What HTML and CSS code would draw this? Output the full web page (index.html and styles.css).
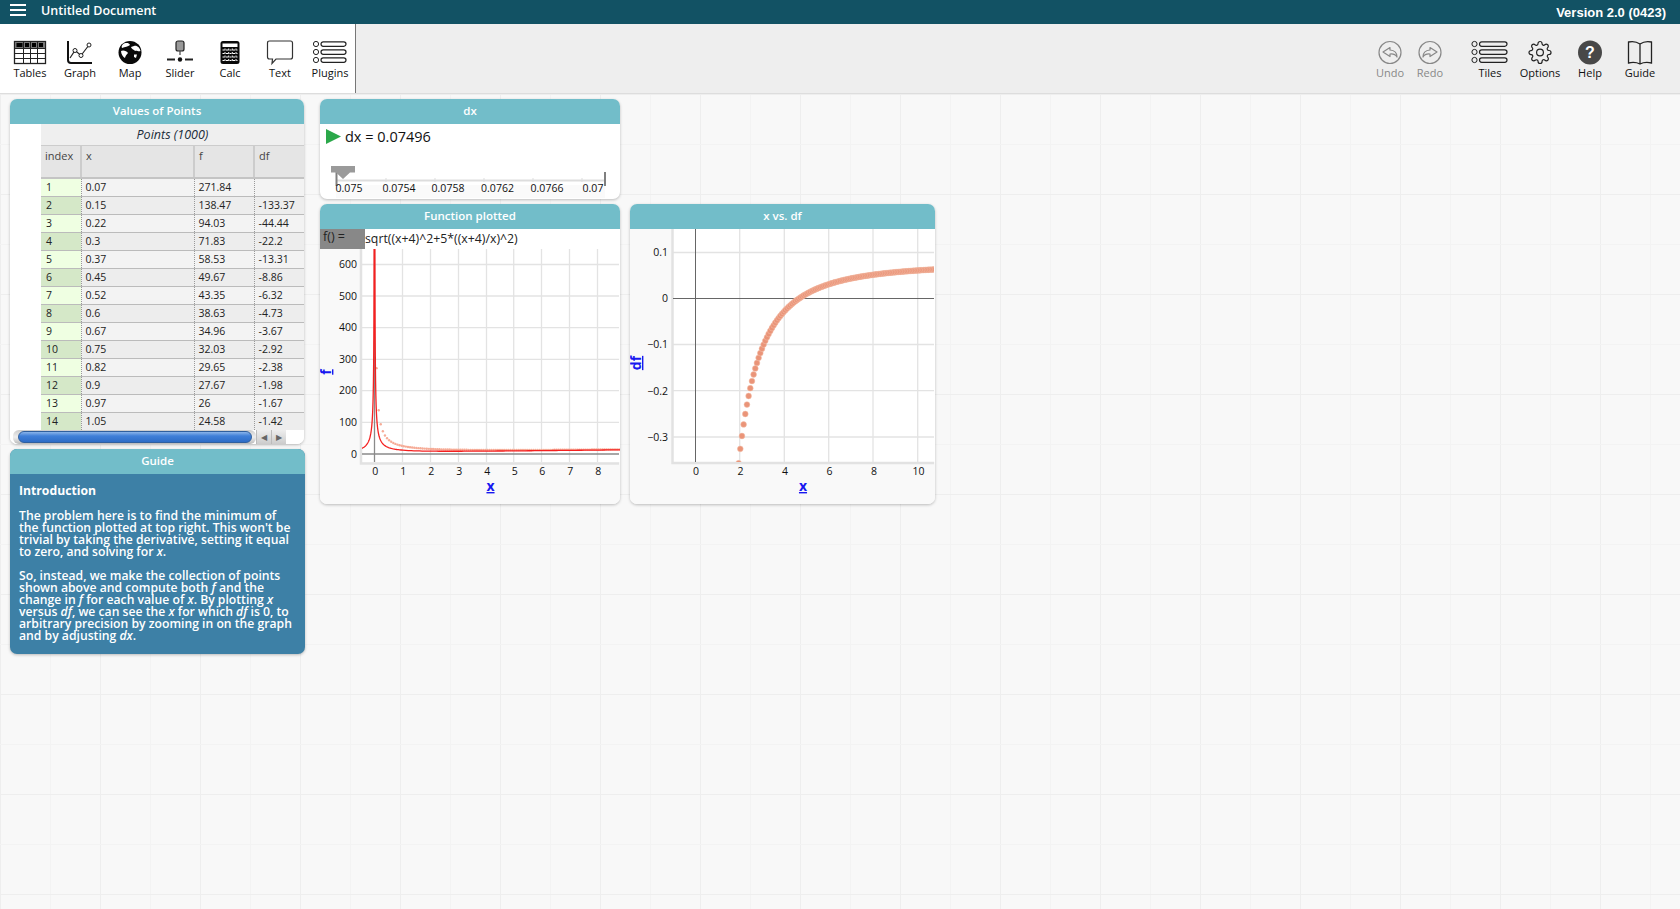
FILE: index.html
```html
<!DOCTYPE html>
<html lang="en">
<head>
<meta charset="utf-8">
<title>Untitled Document</title>
<link rel="stylesheet" href="styles.css">
</head>
<body>
<div class="app">
  <header class="topbar">
    <div class="burger"><span></span><span></span><span></span></div>
    <div class="doc-title">Untitled Document</div>
    <div class="version">Version 2.0 (0423)</div>
  </header>
  <nav class="toolbar">
    <div class="tool-left">
      <div class="tool">
        <svg class="ic" viewBox="0 0 40 26"><rect x="4.5" y="1.5" width="31" height="22" fill="#fff" stroke="#222" stroke-width="1.3"/><rect x="5" y="2" width="30" height="6" fill="#777"/><rect x="6.5" y="3" width="6" height="4" fill="#000"/><rect x="15" y="3" width="4" height="4" fill="#000"/><rect x="22" y="3" width="4" height="4" fill="#000"/><rect x="29" y="3" width="4" height="4" fill="#000"/><path d="M4.500 8.500H35.500M4.500 13.500H35.500M4.500 18.500H35.500M13.500 2V23M20.500 2V23M27.500 2V23" stroke="#222" stroke-width="1" fill="none"/></svg>
        <span class="tool-label">Tables</span>
      </div>
      <div class="tool">
        <svg class="ic" viewBox="0 0 40 26"><path d="M8 1V20Q8 23 11 23H32" fill="none" stroke="#111" stroke-width="2"/><path d="M10 18L15 10.500L21 15.500L29 5" fill="none" stroke="#222" stroke-width="1.200"/><circle cx="15" cy="10.500" r="2" fill="#fff" stroke="#222"/><circle cx="21" cy="15.500" r="2" fill="#fff" stroke="#222"/><circle cx="29" cy="5" r="2" fill="#fff" stroke="#222"/></svg>
        <span class="tool-label">Graph</span>
      </div>
      <div class="tool">
        <svg class="ic" viewBox="0 0 40 26"><circle cx="20" cy="12.500" r="11.500" fill="#0a0a0a"/><path d="M14 3.500C17 2.500 19 3 20 5C18 7 15 6.500 12 8C11 7 12 4.500 14 3.500ZM21 7L24 6C27 5 30 8 30.500 11C28 12 27 10 25 11C24 9 22 10 21 7ZM11 11C13 9.500 17 11 18 13C16.500 15 15.500 15.500 15 18C13 17 11 14 11 11ZM24 14.500L27 14.500L26 18L24 17Z" fill="#fff"/></svg>
        <span class="tool-label">Map</span>
      </div>
      <div class="tool">
        <svg class="ic" viewBox="0 0 40 26"><rect x="16" y="1" width="8" height="10" rx="2" fill="#999" stroke="#222" stroke-width="1.200"/><path d="M20 11V15" stroke="#444" stroke-width="1.200"/><path d="M7 19.500H15M25 19.500H33" stroke="#222" stroke-width="2"/><circle cx="20" cy="19.500" r="2.200" fill="#111"/></svg>
        <span class="tool-label">Slider</span>
      </div>
      <div class="tool">
        <svg class="ic" viewBox="0 0 40 26"><rect x="10.500" y="1" width="19" height="23" rx="2.500" fill="#0a0a0a"/><rect x="12.500" y="3.500" width="15" height="3.500" fill="#fff"/><path d="M12.500 10H27.500M12.500 13.500H27.500M12.500 17H27.500M12.500 20.500H27.500M15 8.500V22.500M18.700 8.500V22.500M22.300 8.500V22.500M26 8.500V22.500" stroke="#fff" stroke-width="1" stroke-dasharray="2 1.500" fill="none"/></svg>
        <span class="tool-label">Calc</span>
      </div>
      <div class="tool">
        <svg class="ic" viewBox="0 0 40 26"><path d="M9.500 1H30.500Q32.500 1 32.500 3V17Q32.500 19 30.500 19H16L12 23.500L12.500 19H9.500Q7.500 19 7.500 17V3Q7.500 1 9.500 1Z" fill="#fff" stroke="#333" stroke-width="1.200"/></svg>
        <span class="tool-label">Text</span>
      </div>
      <div class="tool">
        <svg class="ic" viewBox="0 0 40 26"><circle cx="6" cy="4" r="2.600" fill="none" stroke="#222"/><circle cx="6" cy="12" r="2.600" fill="none" stroke="#222"/><circle cx="6" cy="20" r="2.600" fill="none" stroke="#222"/><rect x="11" y="1.800" width="25" height="4.500" rx="2.200" fill="none" stroke="#222" stroke-width="1.200"/><rect x="11" y="9.800" width="25" height="4.500" rx="2.200" fill="none" stroke="#222" stroke-width="1.200"/><rect x="11" y="17.800" width="25" height="4.500" rx="2.200" fill="none" stroke="#222" stroke-width="1.200"/></svg>
        <span class="tool-label">Plugins</span>
      </div>
    </div>
    <div class="tool-right">
      <div class="tool tool-narrow tool-off">
        <svg class="ic" viewBox="0 0 40 26"><circle cx="20" cy="12.500" r="11" fill="none" stroke="#888" stroke-width="1.200"/><path d="M20 7.500L13 12L20 16.500V14Q25 13.500 27 17Q27 10.500 20 10Z" fill="none" stroke="#888" stroke-width="1.200" stroke-linejoin="round"/></svg>
        <span class="tool-label">Undo</span>
      </div>
      <div class="tool tool-narrow tool-off tool-gap">
        <svg class="ic" viewBox="0 0 40 26"><circle cx="20" cy="12.500" r="11" fill="none" stroke="#888" stroke-width="1.200"/><path d="M20 7.500L27 12L20 16.500V14Q15 13.500 13 17Q13 10.500 20 10Z" fill="none" stroke="#888" stroke-width="1.200" stroke-linejoin="round"/></svg>
        <span class="tool-label">Redo</span>
      </div>
      <div class="tool">
        <svg class="ic" viewBox="0 0 40 26"><circle cx="4.500" cy="4" r="2.600" fill="none" stroke="#222"/><circle cx="4.500" cy="12" r="2.600" fill="none" stroke="#222"/><circle cx="4.500" cy="20" r="2.600" fill="none" stroke="#222"/><rect x="9.500" y="1.800" width="27.500" height="4.500" rx="2.200" fill="none" stroke="#222" stroke-width="1.200"/><rect x="9.500" y="9.800" width="27.500" height="4.500" rx="2.200" fill="none" stroke="#222" stroke-width="1.200"/><rect x="9.500" y="17.800" width="27.500" height="4.500" rx="2.200" fill="none" stroke="#222" stroke-width="1.200"/></svg>
        <span class="tool-label">Tiles</span>
      </div>
      <div class="tool">
        <svg class="ic" viewBox="0 0 40 26"><g transform="translate(8 0.500)" fill="none" stroke="#222" stroke-width="1.200"><circle cx="12" cy="12" r="3.400"/><path d="M19.400 15a1.650 1.650 0 0 0 .33 1.820l.06.06a2 2 0 0 1 0 2.830 2 2 0 0 1-2.830 0l-.06-.06a1.650 1.650 0 0 0-1.820-.33 1.650 1.650 0 0 0-1 1.510V21a2 2 0 0 1-2 2 2 2 0 0 1-2-2v-.09A1.650 1.650 0 0 0 9 19.400a1.650 1.650 0 0 0-1.820.33l-.06.06a2 2 0 0 1-2.830 0 2 2 0 0 1 0-2.830l.06-.06a1.650 1.650 0 0 0 .33-1.820 1.650 1.650 0 0 0-1.510-1H3a2 2 0 0 1-2-2 2 2 0 0 1 2-2h.09A1.650 1.650 0 0 0 4.600 9a1.650 1.650 0 0 0-.33-1.820l-.06-.06a2 2 0 0 1 0-2.830 2 2 0 0 1 2.830 0l.06.06a1.650 1.650 0 0 0 1.820.33H9a1.650 1.650 0 0 0 1-1.510V3a2 2 0 0 1 2-2 2 2 0 0 1 2 2v.09a1.650 1.650 0 0 0 1 1.510 1.650 1.650 0 0 0 1.820-.33l.06-.06a2 2 0 0 1 2.830 0 2 2 0 0 1 0 2.830l-.06.06a1.650 1.650 0 0 0-.33 1.820V9a1.650 1.650 0 0 0 1.510 1H21a2 2 0 0 1 2 2 2 2 0 0 1-2 2h-.09a1.650 1.650 0 0 0-1.510 1z"/></g></svg>
        <span class="tool-label">Options</span>
      </div>
      <div class="tool">
        <svg class="ic" viewBox="0 0 40 26"><circle cx="20" cy="12.500" r="12" fill="#484848"/><text x="20" y="18" class="help-mark">?</text></svg>
        <span class="tool-label">Help</span>
      </div>
      <div class="tool">
        <svg class="ic" viewBox="0 0 40 26"><path d="M20 4Q15 0.500 8.500 2V23Q15 21.500 20 24Q25 21.500 31.500 23V2Q25 0.500 20 4V24" fill="none" stroke="#222" stroke-width="1.300"/></svg>
        <span class="tool-label">Guide</span>
      </div>
    </div>
  </nav>
  <main class="canvas">
    <section class="tile tile-table">
      <div class="tile-head">Values of Points</div>
      <div class="table-wrap">
        <div class="table-gutter"></div>
        <div class="table-main">
          <div class="table-title">Points (1000)</div>
          <table class="data">
            <thead><tr><th class="c-i">index</th><th class="c-x">x</th><th class="c-f">f</th><th class="c-d">df</th></tr></thead>
            <tbody>
              <tr><td>1</td><td>0.07</td><td>271.84</td><td></td></tr>
              <tr><td>2</td><td>0.15</td><td>138.47</td><td>-133.37</td></tr>
              <tr><td>3</td><td>0.22</td><td>94.03</td><td>-44.44</td></tr>
              <tr><td>4</td><td>0.3</td><td>71.83</td><td>-22.2</td></tr>
              <tr><td>5</td><td>0.37</td><td>58.53</td><td>-13.31</td></tr>
              <tr><td>6</td><td>0.45</td><td>49.67</td><td>-8.86</td></tr>
              <tr><td>7</td><td>0.52</td><td>43.35</td><td>-6.32</td></tr>
              <tr><td>8</td><td>0.6</td><td>38.63</td><td>-4.73</td></tr>
              <tr><td>9</td><td>0.67</td><td>34.96</td><td>-3.67</td></tr>
              <tr><td>10</td><td>0.75</td><td>32.03</td><td>-2.92</td></tr>
              <tr><td>11</td><td>0.82</td><td>29.65</td><td>-2.38</td></tr>
              <tr><td>12</td><td>0.9</td><td>27.67</td><td>-1.98</td></tr>
              <tr><td>13</td><td>0.97</td><td>26</td><td>-1.67</td></tr>
              <tr><td>14</td><td>1.05</td><td>24.58</td><td>-1.42</td></tr>
            </tbody>
          </table>
        </div>
      </div>
      <div class="scrollbar">
        <div class="scroll-track"><div class="scroll-thumb"></div></div>
        <div class="scroll-btn">◀</div>
        <div class="scroll-btn">▶</div>
      </div>
    </section>

    <section class="tile tile-guide">
      <div class="tile-head">Guide</div>
      <div class="guide-body">
        <h3 class="guide-h">Introduction</h3>
        <p class="guide-p">The problem here is to find the minimum of<br>the function plotted at top right. This won't be<br>trivial by taking the derivative, setting it equal<br>to zero, and solving for <em>x</em>.</p>
        <p class="guide-p">So, instead, we make the collection of points<br>shown above and compute both <em>f</em> and the<br>change in <em>f</em> for each value of <em>x</em>. By plotting <em>x</em><br>versus <em>df</em>, we can see the <em>x</em> for which <em>df</em> is 0, to<br>arbitrary precision by zooming in on the graph<br>and by adjusting <em>dx</em>.</p>
      </div>
    </section>

    <section class="tile tile-slider">
      <div class="tile-head">dx</div>
      <div class="slider-body">
        <div class="slider-value">
          <svg class="play" viewBox="0 0 15 15"><path d="M0 0L15 7.500L0 15Z"/></svg>
          <span>dx = 0.07496</span>
        </div>
        <svg class="slider-axis" viewBox="320 160 300 39">
          <rect x="336" y="185" width="269" height="13" fill="#fafafa"/>
          <path d="M336 180.500H605" stroke="#ddd" stroke-width="2"/>
          <path d="M386 178V182M435 178V182M484 178V182M533 178V182M582 178V182" stroke="#ddd"/>
          <path d="M336.500 172V186M605 172V186" stroke="#808080" stroke-width="2"/>
          <path d="M331 166H355V172.500H350L343 179L336 172.500H331Z" fill="#9a9a9a"/>
          <text x="349" y="192" class="tick-s">0.075</text>
          <text x="399" y="192" class="tick-s">0.0754</text>
          <text x="448" y="192" class="tick-s">0.0758</text>
          <text x="497.500" y="192" class="tick-s">0.0762</text>
          <text x="547" y="192" class="tick-s">0.0766</text>
          <text x="593" y="192" class="tick-s">0.07</text>
        </svg>
      </div>
    </section>

    <section class="tile tile-func">
      <div class="tile-head">Function plotted</div>
      <div class="formula-row">
        <div class="formula-label">f() =</div>
        <div class="formula-text">sqrt((x+4)^2+5*((x+4)/x)^2)</div>
      </div>
      <svg class="plot plot-f" viewBox="320 249 300 255">
        <defs><clipPath id="clipF"><rect x="362" y="249" width="258" height="213"/></clipPath></defs>
        <rect x="320" y="249" width="300" height="255" fill="#f9f9f9"/>
        <rect x="362" y="249" width="258" height="213" fill="#fff"/>
        <path class="grid" d="M362 264.500H619M362 296H619M362 327.700H619M362 359.300H619M362 390.700H619M362 422.300H619"/>
        <path class="grid" d="M402.500 249V462M430.500 249V462M458.500 249V462M486.500 249V462M513.700 249V462M541.500 249V462M569.500 249V462M597.500 249V462"/>
        <path class="frame" d="M361 249V463.500H619"/>
        <path class="zero-f" d="M362 454H619M374.500 249V462"/>
        <g id="ptsF" clip-path="url(#clipF)"></g>
        <path id="lineF" class="curve" clip-path="url(#clipF)"/>
        <g class="tick">
          <text x="357" y="268" class="te">600</text><text x="357" y="300" class="te">500</text><text x="357" y="331" class="te">400</text><text x="357" y="363" class="te">300</text><text x="357" y="394" class="te">200</text><text x="357" y="426" class="te">100</text><text x="357" y="458" class="te">0</text>
          <text x="375.300" y="474.500">0</text><text x="403.300" y="474.500">1</text><text x="431.300" y="474.500">2</text><text x="459.300" y="474.500">3</text><text x="487.300" y="474.500">4</text><text x="514.700" y="474.500">5</text><text x="542.300" y="474.500">6</text><text x="570.300" y="474.500">7</text><text x="598.300" y="474.500">8</text>
        </g>
        <text x="490.500" y="491" class="axis-label">x</text>
        <text transform="translate(331 372) rotate(-90)" class="axis-label">f</text>
      </svg>
    </section>

    <section class="tile tile-df">
      <div class="tile-head">x vs. df</div>
      <svg class="plot plot-d" viewBox="630 229 305 275">
        <defs><clipPath id="clipD"><rect x="672" y="229" width="262" height="233"/></clipPath></defs>
        <rect x="630" y="229" width="305" height="275" fill="#f9f9f9"/>
        <rect x="673" y="229" width="262" height="233" fill="#fff"/>
        <path class="grid" d="M673 252.500H934M673 344.500H934M673 390.700H934M673 437H934"/>
        <path class="grid" d="M739.700 229V462M784.300 229V462M828.700 229V462M873 229V462M917.700 229V462"/>
        <path class="frame" d="M672.500 229V463H934"/>
        <path class="zero-d" d="M673 298.500H934M695.500 229V462"/>
        <g id="ptsD" clip-path="url(#clipD)"></g>
        <g class="tick">
          <text x="668" y="256" class="te">0.1</text><text x="668" y="302" class="te">0</text><text x="668" y="348" class="te">−0.1</text><text x="668" y="395" class="te">−0.2</text><text x="668" y="441" class="te">−0.3</text>
          <text x="696" y="474.500">0</text><text x="740.500" y="474.500">2</text><text x="785" y="474.500">4</text><text x="829.500" y="474.500">6</text><text x="874" y="474.500">8</text><text x="918.500" y="474.500">10</text>
        </g>
        <text x="803" y="491" class="axis-label">x</text>
        <text transform="translate(641 363) rotate(-90)" class="axis-label">df</text>
      </svg>
    </section>
  </main>
</div>
<script src="chart.js"></script>
</body>
</html>
```

FILE: styles.css
```css
* { box-sizing: border-box; }
html, body { margin: 0; height: 100%; overflow: hidden; }
body { font-family: "Open Sans", "Noto Sans", sans-serif; color: #222; }
.app { display: flex; flex-direction: column; height: 909px; }

.topbar { height: 24px; flex: none; background: #125264; color: #fff; display: flex; align-items: center; padding: 0 14px 0 10px; }
.burger { width: 16px; display: flex; flex-direction: column; gap: 3px; margin-top: -5px; }
.burger span { display: block; height: 2px; background: #fff; }
.doc-title { margin-left: 15px; margin-top: -4px; font-size: 12.5px; font-weight: 600; }
.version { margin-left: auto; font-family: "Liberation Sans", sans-serif; font-size: 13px; font-weight: 700; }

.toolbar { height: 70px; flex: none; background: #eee; border-bottom: 1px solid #ddd; display: flex; justify-content: space-between; }
.tool-left { display: flex; padding: 0 0 0 5px; background: #fff; border-right: 1px solid #777; width: 356px; }
.tool-right { display: flex; padding-right: 15px; }
.tool { width: 50px; display: flex; flex-direction: column; align-items: center; padding-top: 16px; }
.tool-narrow { width: 40px; }
.tool-gap { margin-right: 15px; }
.ic { width: 40px; height: 26px; display: block; }
.tool-label { font-size: 11px; line-height: 14px; color: #111; white-space: nowrap; }
.tool-off .tool-label { color: #888; }
.help-mark { font-family: "Liberation Sans", sans-serif; font-size: 16px; font-weight: 700; fill: #fff; text-anchor: middle; }

.canvas {
  flex: 1; position: relative; background-color: #f8f8f8;
  background-image:
    linear-gradient(#eee 1px, transparent 1px),
    linear-gradient(#f3f3f3 1px, transparent 1px),
    linear-gradient(90deg, #eee 1px, transparent 1px),
    linear-gradient(90deg, #f3f3f3 1px, transparent 1px);
  background-size: 100% 100px, 100% 50px, 100px 100%, 50px 100%;
  background-position: 0 0, 0 0, 0 0, 0 0;
}

.tile { position: absolute; background: #fff; border-radius: 7px; box-shadow: 0 1px 3px rgba(0,0,0,.25); overflow: hidden; display: flex; flex-direction: column; }
.tile-head { height: 25px; flex: none; background: #72bdc9; color: #fff; font-size: 11.5px; font-weight: 600; line-height: 24px; text-align: center; }
.tile-table { left: 10px; top: 5px; width: 294px; height: 345px; }
.tile-guide { left: 10px; top: 355px; width: 295px; height: 205px; background: #3d80a6; }
.tile-slider { left: 320px; top: 5px; width: 300px; height: 100px; }
.tile-func { left: 320px; top: 110px; width: 300px; height: 300px; }
.tile-df { left: 630px; top: 110px; width: 305px; height: 300px; }

.table-wrap { display: flex; flex: 1; min-height: 0; }
.table-gutter { width: 31px; flex: none; }
.table-main { flex: 1; }
.table-title { height: 22px; background: #efefef; border-bottom: 1px solid #ccc; text-align: center; font-style: italic; font-size: 12.5px; line-height: 21px; color: #1b2d3a; }
.data { width: 263px; border-collapse: collapse; table-layout: fixed; font-size: 10.5px; color: #222; }
.data th { height: 32px; background: #e5e5e5; border-right: 2px solid #ccc; border-bottom: 2px solid #c4c4c4; font-weight: 400; text-align: left; vertical-align: top; padding: 2px 4px; font-size: 11px; color: #444; }
.data th:last-child { border-right: 0; }
.c-i { width: 40px; } .c-x { width: 113px; } .c-f { width: 60px; } .c-d { width: 50px; }
.data td { height: 18px; padding: 0 0 0 4px; border-bottom: 1px solid #bbb; border-right: 1px dotted #999; background: #f3f3f3; line-height: 17px; white-space: nowrap; }
.data td:first-child { padding-left: 5px; }
.data td:last-child { border-right: 0; }
.data tr:nth-child(even) td { background: #ededed; }
.data td:first-child { background: #efffe2; }
.data tr:nth-child(even) td:first-child { background: #d5e8c8; }

.scrollbar { height: 14px; flex: none; display: flex; padding-left: 3px; background: #fff; }
.scroll-track { width: 243px; padding: 1px 4px 1px 5px; background: linear-gradient(#ccc, #eee 50%, #bbb); border-radius: 6px; }
.scroll-thumb { height: 12px; border-radius: 6px; border: 1px solid #2f5f9e; background: linear-gradient(#8ab4ea, #3f7fd8 40%, #2d6cc6); }
.scroll-btn { width: 15px; height: 14px; font-size: 8px; line-height: 14px; text-align: center; color: #666; background: linear-gradient(#eee, #ccc); border-left: 1px solid #bbb; }

.guide-body { color: #fff; padding: 9px 8px 0 9px; }
.guide-h { margin: 0 0 11px; font-size: 12.2px; line-height: 16px; font-weight: 700; }
.guide-p { margin: 0 0 12px; font-size: 12.2px; line-height: 12px; font-weight: 600; white-space: nowrap; }

.slider-body { display: flex; flex-direction: column; flex: 1; }
.slider-value { display: flex; align-items: center; height: 36px; padding: 1px 0 0 6px; gap: 4px; font-size: 14.5px; color: #111; margin-top: -6px; }
.play { width: 15px; height: 15px; fill: #2ba84a; }
.slider-axis { width: 300px; height: 39px; margin-top: auto; display: block; }
.tick-s { font-size: 10.500px; text-anchor: middle; fill: #111; }

.formula-row { height: 20px; flex: none; display: flex; position: relative; }
.formula-label { width: 45px; background: #888; font-size: 12.5px; padding-left: 3px; line-height: 15px; color: #222; }
.formula-text { font-size: 12.3px; line-height: 19px; color: #222; }
.plot { display: block; width: 100%; flex: 1; min-height: 0; }
.plot-f { height: 255px; }
.plot-d { height: 275px; }
.grid { stroke: #e3e3e3; stroke-width: 1.300; fill: none; }
.frame { stroke: #e2e2e2; stroke-width: 2.500; fill: none; }
.zero-f { stroke: #8a8a8a; stroke-width: 1.300; fill: none; }
.zero-d { stroke: #666; stroke-width: 1; fill: none; }
.curve { stroke: #f42020; stroke-width: 1.300; fill: none; }
.pt-f { fill: #f6ab96; }
.pt-d { fill: #ea9478; stroke: #f2c0ad; stroke-width: .5; }
.tick text { font-size: 10.500px; fill: #111; text-anchor: middle; }
.tick text.te { text-anchor: end; }
.axis-label { font-size: 14px; font-weight: 700; fill: #1818f0; text-decoration: underline; text-anchor: middle; }
```

FILE: chart.js
```js
var NS = "http://www.w3.org/2000/svg";
var DX = 0.07496;

function fLine(x) {
  var r = (x + 4) / x;
  return Math.sqrt((x + 4) * (x + 4) + 5 * r * r);
}
function fPts(x) {
  var r = 5 * (x + 4) / x;
  return Math.sqrt((x + 4) * (x + 4) + r * r);
}

function dot(parent, cx, cy, r, cls) {
  var c = document.createElementNS(NS, "circle");
  c.setAttribute("cx", cx.toFixed(2));
  c.setAttribute("cy", cy.toFixed(2));
  c.setAttribute("r", r);
  c.setAttribute("class", cls);
  parent.appendChild(c);
}

var fx = function (v) { return 374.5 + 27.9 * v; };
var fy = function (v) { return 454 - 0.3158 * v; };

var d = "";
var x, first = true;
for (x = -0.5; x < -0.006; x *= 0.94) {
  d += (first ? "M" : "L") + fx(x).toFixed(2) + " " + fy(fLine(x)).toFixed(2);
  first = false;
}
first = true;
for (x = 0.006; x < 9; x = x < 1 ? x * 1.06 : x + 0.1) {
  d += (first ? "M" : "L") + fx(x).toFixed(2) + " " + fy(fLine(x)).toFixed(2);
  first = false;
}
document.getElementById("lineF").setAttribute("d", d);

var gF = document.getElementById("ptsF");
var gD = document.getElementById("ptsD");
var prev = null;
for (var i = 1; i <= 150; i++) {
  var px = i * DX;
  var v = fPts(px);
  if (px < 9) dot(gF, fx(px), fy(v), 1.2, "pt-f");
  if (prev !== null) {
    var df = v - prev;
    dot(gD, 695.3 + 22.23 * px, 298.3 - 462.5 * df, 2.9, "pt-d");
  }
  prev = v;
}
```
